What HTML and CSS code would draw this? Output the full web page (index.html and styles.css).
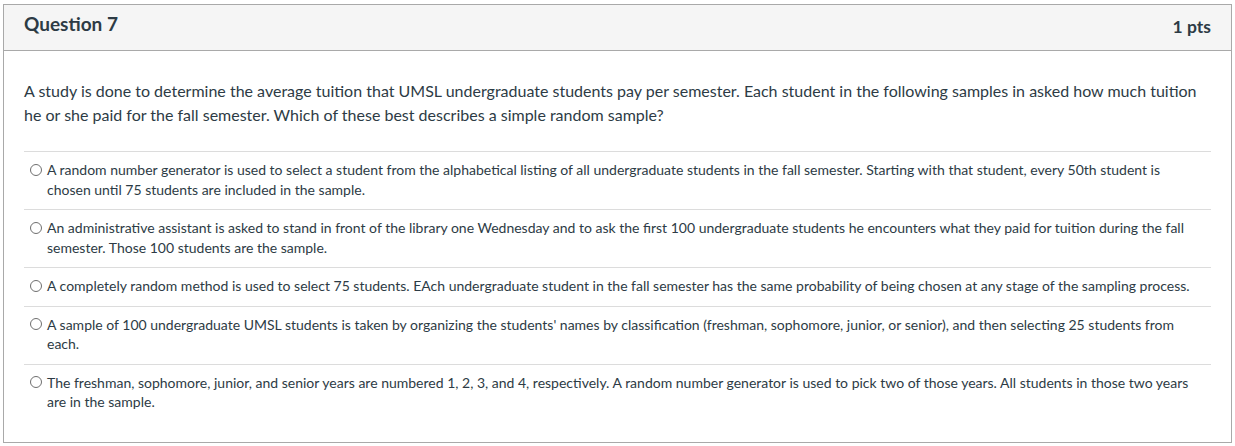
FILE: index.html
```html
<!DOCTYPE html>
<html lang="en">
<head>
<meta charset="utf-8">
<title>Question 7</title>
<link rel="stylesheet" href="styles.css">
</head>
<body>
<div class="question">
  <div class="header">
    <span class="name">Question 7</span>
    <span class="points">1 pts</span>
  </div>
  <div class="content">
    <p class="text">A study is done to determine the average tuition that UMSL undergraduate students pay per semester. Each student in the following samples in asked how much tuition he or she paid for the fall semester. Which of these best describes a simple random sample?</p>
    <div class="answers">
      <label class="answer"><span class="radio"></span><span class="label">A random number generator is used to select a student from the alphabetical listing of all undergraduate students in the fall semester. Starting with that student, every 50th student is chosen until 75 students are included in the sample.</span></label>
      <label class="answer"><span class="radio"></span><span class="label">An administrative assistant is asked to stand in front of the library one Wednesday and to ask the first 100 undergraduate students he encounters what they paid for tuition during the fall semester. Those 100 students are the sample.</span></label>
      <label class="answer"><span class="radio"></span><span class="label">A completely random method is used to select 75 students. EAch undergraduate student in the fall semester has the same probability of being chosen at any stage of the sampling process.</span></label>
      <label class="answer"><span class="radio"></span><span class="label">A sample of 100 undergraduate UMSL students is taken by organizing the students' names by classification (freshman, sophomore, junior, or senior), and then selecting 25 students from each.</span></label>
      <label class="answer"><span class="radio"></span><span class="label">The freshman, sophomore, junior, and senior years are numbered 1, 2, 3, and 4, respectively. A random number generator is used to pick two of those years. All students in those two years are in the sample.</span></label>
    </div>
  </div>
</div>
</body>
</html>
```

FILE: styles.css
```css
html, body {
  margin: 0;
  background: #ffffff;
}
body {
  padding: 4px 4px 0 3px;
  font-family: Lato, "Liberation Sans", sans-serif;
  color: #2d3b45;
}
.question {
  border: 1px solid #a9a9a9;
  box-sizing: border-box;
  width: 1229px;
  height: 439px;
}
.header {
  display: flex;
  justify-content: space-between;
  align-items: center;
  height: 45px;
  padding: 0 20px 0 20px;
  background: #f5f5f5;
  border-bottom: 1px solid #a9a9a9;
}
.name {
  font-size: 19px;
  font-weight: 700;
  position: relative;
  top: -4px;
}
.points {
  font-size: 17.5px;
  font-weight: 700;
  position: relative;
  top: -1px;
}
.content {
  padding: 0 20px;
}
.text {
  margin: 28px 0 24px 0;
  font-size: 16px;
  line-height: 24px;
}
.answers {
  display: flex;
  flex-direction: column;
}
.answer {
  display: flex;
  align-items: flex-start;
  border-top: 1px solid #dcdcdc;
  padding: 8px 0 10px 0;
  font-size: 14px;
  line-height: 19.5px;
}
.radio {
  flex: none;
  width: 12px;
  height: 12px;
  box-sizing: border-box;
  border: 1px solid #6f6f6f;
  border-radius: 50%;
  background: #fff;
  margin: 3.5px 5px 0 6px;
}
.label {
  flex: 1;
  padding-right: 10px;
}
```
